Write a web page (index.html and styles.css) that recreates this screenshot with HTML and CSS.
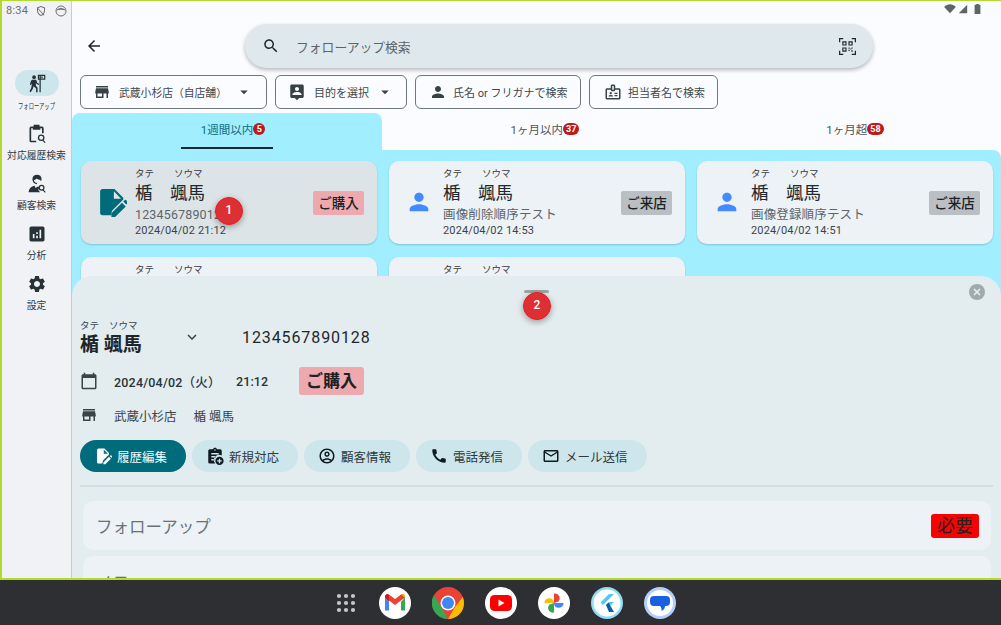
FILE: index.html
```html
<!DOCTYPE html>
<html lang="ja">
<head>
<meta charset="utf-8">
<title>フォローアップ</title>
<link rel="stylesheet" href="styles.css">
</head>
<body>
<div class="screen">
  <nav class="rail">
    <div class="status">
      <span class="time">8:34</span>
      <svg class="st-ico" viewBox="0 0 24 24"><path d="M12 2 4 5v6c0 5 3.400 9.400 8 11 4.600-1.600 8-6 8-11V5zm0 2.200 6 2.200V11c0 4-2.600 7.600-6 9-3.400-1.400-6-5-6-9V6.400z"/><path d="M5 5l14 15-1.400 1.200L4 6z"/></svg>
      <svg class="st-ico" viewBox="0 0 24 24"><circle cx="12" cy="12" r="10" fill="none" stroke="currentColor" stroke-width="2"/><path d="M3 11c2-7 16-7 18 0-5-2-13-2-18 0z"/></svg>
    </div>
    <a class="rail-item first">
      <span class="pill">
        <svg class="rail-ico" viewBox="0 0 24 24"><circle cx="8.500" cy="5" r="2.200"/><path d="M6 8h5l1.500 4 2 1v1.500l-3-1.300-.8-1.500v3.500l2 2.500V23h-1.800v-4.500L8 16l-1 3-2.500 4L3 22l2-4 1-5-1.500 1.500L3.500 14l1-4z"/><path d="M15 3h1.500v20H15z"/><path d="M13 2h9v6h-9zm1.500 1.500v3h6v-3z"/><path d="M16 4.300h3v1.400h-3z"/></svg>
      </span>
      <span class="rail-label small">フォローアップ</span>
    </a>
    <a class="rail-item">
      <svg class="rail-ico plain" viewBox="0 0 24 24"><path d="M8 1h7v2h3a2 2 0 0 1 2 2v6h-2V5h-2v2H7V5H5v15h6v2H5a2 2 0 0 1-2-2V5a2 2 0 0 1 2-2h3z"/><circle cx="17" cy="16.500" r="3.200" fill="none" stroke="currentColor" stroke-width="1.600"/><path d="m19.300 18.800 3 3-1.100 1.100-3-3z"/></svg>
      <span class="rail-label">対応履歴検索</span>
    </a>
    <a class="rail-item">
      <svg class="rail-ico plain" viewBox="0 0 24 24"><path d="M6.500 6C6.500 2.800 9 1 12 1s5.500 1.800 5.500 5c0 .9-.2 1.800-.6 2.500l-1.100-.6c.1-.3.200-.6.200-1-1.200 0-3-.4-4.200-1.600C10.800 6.300 9.300 7.200 8.200 7.300c.3 2 1.800 3.500 3.800 3.500v1.400c-3 0-5.500-2.800-5.500-6.200z"/><path d="M2 22c0-4.500 3.500-7.200 7-7.800L11 18l1-1 .5 5zM14 14.300l-.5 1 1.400 1.200-1.400 2.500 2 3H2.500z"/><circle cx="17.500" cy="16.500" r="2.800" fill="none" stroke="currentColor" stroke-width="1.500"/><path d="m19.500 18.500 3 3-1 1-3-3z"/></svg>
      <span class="rail-label">顧客検索</span>
    </a>
    <a class="rail-item">
      <svg class="rail-ico plain" viewBox="0 0 24 24"><path d="M19 3H5c-1.100 0-2 .9-2 2v14c0 1.100.9 2 2 2h14c1.100 0 2-.9 2-2V5c0-1.100-.9-2-2-2zM9 17H7v-5h2v5zm4 0h-2v-3h2v3zm0-5h-2v-2h2v2zm4 5h-2V7h2v10z"/></svg>
      <span class="rail-label">分析</span>
    </a>
    <a class="rail-item">
      <svg class="rail-ico plain" viewBox="0 0 24 24"><path d="M19.140 12.940c.04-.3.06-.61.06-.94 0-.32-.02-.64-.07-.94l2.030-1.580c.18-.14.23-.41.12-.61l-1.920-3.320c-.12-.22-.37-.29-.59-.22l-2.390.96c-.5-.38-1.030-.7-1.620-.94l-.36-2.540c-.04-.24-.24-.41-.48-.41h-3.840c-.24 0-.43.17-.47.41l-.36 2.540c-.59.24-1.130.57-1.620.94l-2.390-.96c-.22-.08-.47 0-.59.22L2.740 8.870c-.12.21-.08.47.12.61l2.030 1.580c-.05.3-.09.63-.09.94s.02.64.07.94l-2.030 1.580c-.18.14-.23.41-.12.61l1.920 3.320c.12.22.37.29.59.22l2.390-.96c.5.38 1.030.7 1.620.94l.36 2.540c.05.24.24.41.48.41h3.840c.24 0 .44-.17.47-.41l.36-2.540c.59-.24 1.130-.56 1.620-.94l2.390.96c.22.08.47 0 .59-.22l1.920-3.320c.12-.22.07-.47-.12-.61l-2.010-1.580zM12 15.600c-1.980 0-3.600-1.620-3.600-3.600s1.620-3.600 3.600-3.600 3.600 1.620 3.600 3.600-1.620 3.600-3.600 3.600z"/></svg>
      <span class="rail-label">設定</span>
    </a>
  </nav>

  <main class="main">
    <div class="sys-icons">
      <svg viewBox="0 0 14 12" class="sys wifi"><path d="M0 3.500C3.800-.6 10.200-.6 14 3.500L7 11z"/></svg>
      <svg viewBox="0 0 12 12" class="sys signal"><path d="M11 1v10H1z"/></svg>
      <svg viewBox="0 0 8 12" class="sys batt"><path d="M2.500 0h3v1H7.500v11H.5V1h2z"/></svg>
    </div>
    <div class="top-row">
      <svg class="back" viewBox="0 0 24 24"><path d="M20 11H7.830l5.590-5.590L12 4l-8 8 8 8 1.410-1.410L7.830 13H20v-2z"/></svg>
      <div class="search">
        <svg class="search-ico" viewBox="0 0 24 24"><path d="M15.500 14h-.79l-.28-.27C15.410 12.590 16 11.110 16 9.500 16 5.910 13.090 3 9.500 3S3 5.910 3 9.500 5.910 16 9.500 16c1.610 0 3.090-.59 4.230-1.570l.27.28v.79l5 4.990L20.490 19l-4.990-5zm-6 0C7.010 14 5 11.990 5 9.500S7.010 5 9.500 5 14 7.010 14 9.500 11.990 14 9.500 14z"/></svg>
        <span class="search-text">フォローアップ検索</span>
        <svg class="qr" viewBox="0 0 18 18"><path d="M0 0h4.500v1.300H1.300v3.200H0zM13.500 0H18v4.500h-1.300V1.300h-3.200zM0 13.500h1.300v3.200h3.200V18H0zM16.700 13.500H18V18h-4.500v-1.300h3.200z"/><path fill-rule="evenodd" d="M3.500 3.500h4.500V8H3.500zm1.200 1.200v2.100h2.100V4.700zM10 3.500h4.500V8H10zm1.200 1.200v2.100h2.100V4.700zM3.500 10H8v4.500H3.500zm1.200 1.200v2.100h2.100v-2.100z"/><path d="M10 10h1.300v1.300H10zM12 11h1.300v1.300H12zM10 12.500h1.300v1.300H10zM13 13h1.500v1.500H13zM13.300 10h1.200v1H13.300z"/></svg>
      </div>
    </div>
    <div class="filters">
      <button class="filter store-filter">
        <svg class="f-ico" viewBox="0 0 24 24"><path d="M20 4H4v2h16V4zm1 10v-2l-1-5H4l-1 5v2h1v6h10v-6h4v6h2v-6h1zm-9 4H6v-4h6v4z"/></svg>
        <span>武蔵小杉店（自店舗）</span>
        <svg class="caret" viewBox="0 0 24 24"><path d="M7 10l5 5 5-5z"/></svg>
      </button>
      <button class="filter purpose-filter">
        <svg class="f-ico" viewBox="0 0 24 24"><path d="M19 2H5c-1.110 0-2 .9-2 2v14c0 1.100.89 2 2 2h4l3 3 3-3h4c1.100 0 2-.9 2-2V4c0-1.100-.9-2-2-2zm-7 3.300c1.490 0 2.700 1.210 2.700 2.700 0 1.490-1.210 2.700-2.700 2.700-1.490 0-2.700-1.210-2.700-2.700 0-1.490 1.210-2.700 2.700-2.700zM18 16H6v-.9c0-2 4-3.100 6-3.100s6 1.100 6 3.100v.9z"/></svg>
        <span>目的を選択</span>
        <svg class="caret" viewBox="0 0 24 24"><path d="M7 10l5 5 5-5z"/></svg>
      </button>
      <button class="filter name-filter">
        <svg class="f-ico" viewBox="0 0 24 24"><path d="M12 12c2.210 0 4-1.790 4-4s-1.790-4-4-4-4 1.790-4 4 1.790 4 4 4zm0 2c-2.670 0-8 1.340-8 4v2h16v-2c0-2.660-5.330-4-8-4z"/></svg>
        <span>氏名 or フリガナで検索</span>
      </button>
      <button class="filter staff-filter">
        <svg class="f-ico" viewBox="0 0 24 24"><path fill-rule="evenodd" d="M20 7h-5V4c0-1.100-.9-2-2-2h-2c-1.100 0-2 .9-2 2v3H4c-1.100 0-2 .9-2 2v11c0 1.100.9 2 2 2h16c1.100 0 2-.9 2-2V9c0-1.100-.9-2-2-2zM11 4h2v5h-2zm9 16H4V9h5c0 1.100.9 2 2 2h2c1.100 0 2-.9 2-2h5z"/><circle cx="9" cy="13.500" r="1.500"/><path d="M6 18c0-1.500 2-2 3-2s3 .5 3 2zM14 13h4v1.500h-4zM14 16h4v1.500h-4z"/></svg>
        <span>担当者名で検索</span>
      </button>
    </div>
    <div class="tabs">
      <div class="tab active"><span class="tab-text">1週間以内</span><span class="count">5</span><i class="tab-line"></i></div>
      <div class="tab"><span class="tab-text">1ヶ月以内</span><span class="count">37</span></div>
      <div class="tab"><span class="tab-text">1ヶ月超</span><span class="count">58</span></div>
    </div>
    <section class="content">
      <div class="cards">
        <article class="card selected">
          <svg class="card-ico" viewBox="0 0 24 24"><path d="M14 1.500H4.500a2 2 0 0 0-2 2v17a2 2 0 0 0 2 2h6.800l.7-3.500L21 10V8.500z"/><path fill="#dfe6ea" d="M13.500 3.300v6h5.700z"/><path d="M20 12.500l3 3-8.500 8.500h-3v-3zM21 11.500l1-1a1 1 0 0 1 1.400 0l1 1a1 1 0 0 1 0 1.400l-1 1z"/></svg>
          <div class="card-body">
            <div class="kana"><span>タテ</span><span>ソウマ</span></div>
            <div class="name">楯　颯馬</div>
            <div class="memo">1234567890128</div>
            <div class="date">2024/04/02 21:12</div>
          </div>
          <span class="tag buy">ご購入</span>
        </article>
        <article class="card">
          <svg class="card-ico person" viewBox="0 0 24 24"><path d="M12 12c2.210 0 4-1.790 4-4s-1.790-4-4-4-4 1.790-4 4 1.790 4 4 4zm0 2c-2.670 0-8 1.340-8 4v2h16v-2c0-2.660-5.330-4-8-4z"/></svg>
          <div class="card-body">
            <div class="kana"><span>タテ</span><span>ソウマ</span></div>
            <div class="name">楯　颯馬</div>
            <div class="memo">画像削除順序テスト</div>
            <div class="date">2024/04/02 14:53</div>
          </div>
          <span class="tag visit">ご来店</span>
        </article>
        <article class="card">
          <svg class="card-ico person" viewBox="0 0 24 24"><path d="M12 12c2.210 0 4-1.790 4-4s-1.790-4-4-4-4 1.790-4 4 1.790 4 4 4zm0 2c-2.670 0-8 1.340-8 4v2h16v-2c0-2.660-5.330-4-8-4z"/></svg>
          <div class="card-body">
            <div class="kana"><span>タテ</span><span>ソウマ</span></div>
            <div class="name">楯　颯馬</div>
            <div class="memo">画像登録順序テスト</div>
            <div class="date">2024/04/02 14:51</div>
          </div>
          <span class="tag visit">ご来店</span>
        </article>
        <article class="card">
          <div class="card-ico"></div>
          <div class="card-body"><div class="kana"><span>タテ</span><span>ソウマ</span></div></div>
        </article>
        <article class="card">
          <div class="card-ico"></div>
          <div class="card-body"><div class="kana"><span>タテ</span><span>ソウマ</span></div></div>
        </article>
      </div>
    </section>

    <section class="sheet">
      <div class="handle"></div>
      <svg class="close" viewBox="0 0 16 16"><circle cx="8" cy="8" r="8" fill="#a0a9ab"/><path d="M5 5l6 6M11 5l-6 6" stroke="#e6eef0" stroke-width="1.600"/></svg>
      <div class="who">
        <div class="who-name">
          <div class="who-kana"><span>タテ</span><span>ソウマ</span></div>
          <div class="who-full">楯 颯馬</div>
        </div>
        <svg class="chev" viewBox="0 0 24 24"><path d="M16.590 8.590L12 13.170 7.410 8.590 6 10l6 6 6-6z"/></svg>
        <div class="who-id">1234567890128</div>
      </div>
      <div class="info when">
        <svg class="info-ico" viewBox="0 0 24 24"><path d="M20 3h-1V1h-2v2H7V1H5v2H4c-1.100 0-2 .9-2 2v16c0 1.100.9 2 2 2h16c1.100 0 2-.9 2-2V5c0-1.100-.9-2-2-2zm0 18H4V8h16v13z"/></svg>
        <span class="when-date">2024/04/02（火）</span>
        <span class="when-time">21:12</span>
        <span class="big-tag">ご購入</span>
      </div>
      <div class="info where">
        <svg class="info-ico" viewBox="0 0 24 24"><path d="M20 4H4v2h16V4zm1 10v-2l-1-5H4l-1 5v2h1v6h10v-6h4v6h2v-6h1zm-9 4H6v-4h6v4z"/></svg>
        <span class="where-store">武蔵小杉店</span>
        <span>楯 颯馬</span>
      </div>
      <div class="actions">
        <button class="chip primary">
          <svg class="chip-ico" viewBox="0 0 24 24"><path d="M14 2H6a2 2 0 0 0-2 2v16a2 2 0 0 0 2 2h5l1-4 8-8V8zM13 9V3.500L18.500 9z"/><path d="M20 13l2.500 2.500L15 23h-2.500v-2.500zM21 12l.8-.8a.9.9 0 0 1 1.300 0l1 1a.9.9 0 0 1 0 1.300l-.8.8z"/></svg>
          <span>履歴編集</span>
        </button>
        <button class="chip">
          <svg class="chip-ico" viewBox="0 0 24 24"><path d="M19 3h-4.180C14.400 1.840 13.300 1 12 1s-2.400.84-2.820 2H5a2 2 0 0 0-2 2v15a2 2 0 0 0 2 2h7.300A7 7 0 0 1 21 11.300V5a2 2 0 0 0-2-2zm-7 0a1 1 0 1 1 0 2 1 1 0 0 1 0-2zM7 8h10v2H7zm0 4h6v2H7zm0 4h4v2H7z"/><path fill-rule="evenodd" d="M18 13a5.500 5.500 0 1 0 0 11 5.500 5.500 0 0 0 0-11zm-.9 2.500h1.800v2.100H21v1.800h-2.100v2.100h-1.800v-2.100H15v-1.800h2.100z"/></svg>
          <span>新規対応</span>
        </button>
        <button class="chip">
          <svg class="chip-ico" viewBox="0 0 24 24"><path d="M12 2C6.480 2 2 6.480 2 12s4.480 10 10 10 10-4.480 10-10S17.520 2 12 2zM7.350 18.500C8.660 17.560 10.260 17 12 17s3.340.56 4.650 1.500c-1.310.94-2.910 1.500-4.650 1.500s-3.340-.56-4.650-1.500zm10.790-1.380C16.450 15.800 14.320 15 12 15s-4.450.8-6.140 2.120C4.700 15.730 4 13.950 4 12c0-4.420 3.580-8 8-8s8 3.580 8 8c0 1.950-.7 3.730-1.860 5.120z"/><path d="M12 6c-1.930 0-3.500 1.570-3.500 3.500S10.070 13 12 13s3.500-1.570 3.500-3.500S13.930 6 12 6zm0 5c-.83 0-1.500-.67-1.500-1.500S11.170 8 12 8s1.500.67 1.500 1.500S12.830 11 12 11z"/></svg>
          <span>顧客情報</span>
        </button>
        <button class="chip">
          <svg class="chip-ico" viewBox="0 0 24 24"><path d="M20.010 15.380c-1.230 0-2.420-.2-3.530-.56-.35-.12-.74-.03-1.010.24l-1.570 1.970c-2.830-1.350-5.480-3.900-6.890-6.830l1.950-1.660c.27-.28.35-.67.24-1.020-.37-1.110-.56-2.300-.56-3.530 0-.54-.45-.99-.99-.99H4.190C3.650 3 3 3.240 3 3.990 3 13.280 10.730 21 20.010 21c.71 0 .99-.63.99-1.180v-3.450c0-.54-.45-.99-.99-.99z"/></svg>
          <span>電話発信</span>
        </button>
        <button class="chip mail">
          <svg class="chip-ico" viewBox="0 0 24 24"><path d="M20 4H4c-1.100 0-1.990.9-1.990 2L2 18c0 1.100.9 2 2 2h16c1.100 0 2-.9 2-2V6c0-1.100-.9-2-2-2zm0 14H4V8l8 5 8-5v10zm-8-7L4 6h16l-8 5z"/></svg>
          <span>メール送信</span>
        </button>
      </div>
      <hr class="divider">
      <div class="panel">
        <span class="panel-title">フォローアップ</span>
        <span class="need">必要</span>
      </div>
      <div class="panel memo-panel">
        <span class="panel-title">メモ</span>
      </div>
    </section>

    <span class="marker m1">1</span>
    <span class="marker m2">2</span>
  </main>
</div>
<footer class="dock">
  <svg class="dots" viewBox="0 0 20 20"><g fill="#c4c7cb"><circle cx="3" cy="3" r="2.100"/><circle cx="10" cy="3" r="2.100"/><circle cx="17" cy="3" r="2.100"/><circle cx="3" cy="10" r="2.100"/><circle cx="10" cy="10" r="2.100"/><circle cx="17" cy="10" r="2.100"/><circle cx="3" cy="17" r="2.100"/><circle cx="10" cy="17" r="2.100"/><circle cx="17" cy="17" r="2.100"/></g></svg>
  <svg class="app" viewBox="0 0 32 32"><circle cx="16" cy="16" r="16" fill="#fff"/><path d="M6 10.500v13h4V15z" fill="#4285f4"/><path d="M22 15v8.500h4v-13z" fill="#34a853"/><path d="M6 10.500 16 18l10-7.500V9a2.500 2.500 0 0 0-4-1.500L16 12l-6-4.500A2.500 2.500 0 0 0 6 9z" fill="#ea4335"/><path d="M22 7.500l4 3 0-1.500a2.500 2.500 0 0 0-4-1.500z" fill="#fbbc04"/><path d="M6 9v1.500L10 15V8A2.500 2.500 0 0 0 6 9z" fill="#c5221f"/></svg>
  <svg class="app" viewBox="0 0 32 32"><circle cx="16" cy="16" r="16" fill="#ea4335"/><path d="M16 32A16 16 0 0 1 2.100 8l7 12z" fill="#34a853"/><path d="M16 32l7-12 7.800-10A16 16 0 0 1 16 32z" fill="#fbbc04"/><circle cx="16" cy="16" r="7.500" fill="#fff"/><circle cx="16" cy="16" r="6" fill="#4285f4"/></svg>
  <svg class="app" viewBox="0 0 32 32"><circle cx="16" cy="16" r="16" fill="#fff"/><rect x="5" y="8" width="22" height="16" rx="4.500" fill="#f00"/><path d="M13.500 12.500v7l6-3.500z" fill="#fff"/></svg>
  <svg class="app" viewBox="0 0 32 32"><circle cx="16" cy="16" r="16" fill="#fff"/><path d="M16 16H6.500a4.800 4.800 0 0 1 9.500-1z" fill="#fbbc04"/><path d="M16 16V6.500a4.800 4.800 0 0 1 1-.1 4.800 4.800 0 0 1 3.500 8z" fill="#ea4335"/><path d="M16 16h9.500a4.800 4.800 0 0 1-9.500 1z" fill="#4285f4"/><path d="M16 16v9.500a4.800 4.800 0 0 1-4.500-8z" fill="#34a853"/></svg>
  <svg class="app" viewBox="0 0 32 32"><circle cx="16" cy="16" r="16" fill="#8fdcf5"/><circle cx="16" cy="16" r="13.500" fill="#fff"/><path d="M18 7h5l-11 11-2.500-2.500z" fill="#54c5f8"/><path d="M18 15h5l-5.500 5.500-2.500-2.500z" fill="#54c5f8"/><path d="M15 18l2.500-2.500L23 25h-5z" fill="#01579b" opacity=".95"/></svg>
  <svg class="app" viewBox="0 0 32 32"><circle cx="16" cy="16" r="16" fill="#b4cefb"/><circle cx="16" cy="16" r="13" fill="#fff"/><path d="M10 9h12a4 4 0 0 1 4 4v2a4 4 0 0 1-4 4h-1c0 2-1 4-3.500 5 .3-2-.2-3.800-1.500-5H10a4 4 0 0 1-4-4v-2a4 4 0 0 1 4-4z" fill="#1a5fe0"/></svg>
</footer>
</body>
</html>
```

FILE: styles.css
```css
* { box-sizing: border-box; }
html, body { margin: 0; padding: 0; }
body {
  width: 1001px;
  height: 625px;
  overflow: hidden;
  display: flex;
  flex-direction: column;
  font-family: Roboto, "Noto Sans CJK JP", sans-serif;
  color: #1f2a30;
  background: #2d2f33;
}
button { font: inherit; color: inherit; background: none; padding: 0; margin: 0; }
svg { fill: currentColor; display: block; flex: none; }

.screen {
  flex: none;
  height: 580px;
  display: flex;
  border-top: 1px solid #b3d92c;
  border-left: 2px solid #b3d92c;
  border-bottom: 2px solid #b3d92c;
  background: #fafcff;
}

/* rail */
.rail {
  flex: none;
  width: 70px;
  background: #f0f2f5;
  border-right: 1px solid #c9ccce;
  display: flex;
  flex-direction: column;
  align-items: center;
}
.status {
  align-self: stretch;
  height: 69px;
  padding: 3px 0 0 4px;
  display: flex;
  align-items: flex-start;
  gap: 7px;
  color: #6c7073;
  font-size: 10px;
  line-height: 14px;
  flex: none;
}
.time { font-size: 11px; letter-spacing: .2px; }
.st-ico { width: 12px; height: 12px; margin-top: 1px; }
.status .st-ico + .st-ico { margin-left: 1px; }
.rail-item {
  width: 100%;
  height: 50px;
  display: flex;
  flex-direction: column;
  align-items: center;
  flex: none;
  color: #263238;
}
.rail-item.first { height: 51px; }
.pill {
  width: 44px;
  height: 26px;
  border-radius: 13px;
  background: #cde6ec;
  display: flex;
  align-items: center;
  justify-content: center;
}
.rail-ico { width: 20px; height: 20px; }
.rail-ico.plain { margin-top: 3px; }
.rail-label {
  font-size: 9.800px;
  line-height: 12px;
  margin-top: 6px;
  white-space: nowrap;
  color: #30393e;
}
.rail-label.small { font-size: 5.300px; margin-top: 4px; transform: scaleY(1.500); }

/* main */
.main { flex: 1; min-width: 0; position: relative; display: flex; flex-direction: column; }
.sys-icons {
  position: absolute;
  top: 3px;
  right: 20px;
  display: flex;
  gap: 2px;
  color: #5f6468;
}
.sys { height: 10px; width: 12px; }
.wifi { width: 12px; }
.signal { width: 10px; }
.batt { width: 7px; margin-left: 4px; }

.top-row {
  flex: none;
  height: 44px;
  margin-top: 23px;
  display: flex;
  align-items: center;
  padding-left: 13px;
}
.back { width: 18px; height: 18px; color: #1d2528; }
.search {
  width: 628px;
  height: 44px;
  margin-left: 142px;
  border-radius: 22px;
  background: #dfe9ed;
  box-shadow: 0 2px 4px rgba(0,0,0,.28);
  display: flex;
  align-items: center;
  padding: 0 17px;
}
.search-ico { width: 18px; height: 18px; color: #22292d; }
.search-text { margin-left: 16px; font-size: 12.800px; color: #5b6469; flex: 1; }
.qr { width: 17px; height: 17px; color: #1e272b; }

.filters {
  flex: none;
  display: flex;
  height: 34px;
  margin: 7px 0 0 8px;
  gap: 8px;
}
.filter {
  height: 34px;
  border: 1px solid #6e787c;
  border-radius: 6px;
  display: flex;
  align-items: center;
  font-size: 11px;
  color: #3d474c;
  padding: 0 0 0 12px;
}
.f-ico { width: 18px; height: 18px; color: #374247; margin-right: 8px; }
.caret { width: 18px; height: 18px; color: #374247; }
.store-filter { width: 187px; font-size: 10.800px; }
.store-filter .caret { margin-left: 8px; }
.purpose-filter { width: 132px; }
.purpose-filter .caret { margin-left: 7px; }
.name-filter { width: 166px; padding-left: 13px; }
.name-filter .f-ico { margin-right: 6px; }
.staff-filter { width: 129px; padding-left: 14px; }
.staff-filter .f-ico { margin-right: 6px; }

.tabs { flex: none; display: flex; height: 37px; margin-top: 4px; }
.tab {
  flex: 0 0 310px;
  position: relative;
  display: flex;
  align-items: flex-start;
  justify-content: center;
  padding: 9px 0 0 16px;
  font-size: 11.500px;
  line-height: 16px;
  color: #4d565b;
}
.tab.active { background: #a0eeff; border-radius: 8px 8px 0 0; color: #0c6f80; padding-left: 12px; }
.count {
  min-width: 12px;
  height: 12px;
  border-radius: 6px;
  padding: 0 3px;
  margin-top: 1px;
  background: #bd1a1a;
  color: #fff;
  font-size: 9px;
  font-weight: 700;
  line-height: 12px;
  text-align: center;
}
.tab-line {
  position: absolute;
  left: 109px;
  width: 92px;
  bottom: 1px;
  height: 2px;
  background: #1a2a30;
}

.content {
  flex: 1;
  min-height: 0;
  overflow: hidden;
  background: #a0eeff;
  border-radius: 0 8px 0 0;
  padding: 11px 8px 0 9px;
}
.cards {
  display: grid;
  grid-template-columns: repeat(3, 296px);
  grid-auto-rows: 83px;
  column-gap: 12px;
  row-gap: 13px;
}
.card {
  background: #edf2f6;
  border-radius: 10px;
  box-shadow: 0 1px 2px rgba(0,0,0,.18);
  display: flex;
  align-items: flex-start;
  padding: 0 13px 0 16px;
  position: relative;
}
.card.selected { background: #dde4e7; }
.card-ico { width: 30px; height: 30px; margin: 26px 8px 0 0; color: #006b7a; flex: none; }
.card-ico.person { color: #448aff; margin: 27px 10px 0 0; width: 28px; height: 28px; }
.card-body { flex: 1; min-width: 0; padding-top: 7px; }
.kana { display: flex; font-size: 9.500px; line-height: 12px; color: #333b40; }
.kana span:first-child { width: 39px; }
.name { font-size: 17.500px; line-height: 26px; color: #20282c; }
.memo { font-size: 12.500px; line-height: 17px; color: #5c6469; letter-spacing: .15px; }
.date { font-size: 11px; line-height: 15px; color: #3c4449; letter-spacing: .15px; }
.tag {
  flex: none;
  width: 51px;
  height: 24px;
  margin-top: 30px;
  font-size: 13.500px;
  font-weight: 500;
  line-height: 24px;
  text-align: center;
  border-radius: 2px;
  color: #1c2226;
}
.tag.buy { background: #eea9ae; }
.tag.visit { background: #b9bfc2; }

/* sheet */
.sheet {
  position: absolute;
  left: 0;
  right: 0;
  top: 275px;
  bottom: 0;
  overflow: hidden;
  background: #e3ecef;
  border-radius: 20px 20px 0 0;
  display: flex;
  flex-direction: column;
  padding: 0 8px;
}
.handle {
  flex: none;
  align-self: center;
  width: 25px;
  height: 3px;
  margin-top: 14px;
  border-radius: 2px;
  background: #9ca5a8;
}
.close {
  position: absolute;
  top: 8px;
  right: 16px;
  width: 16px;
  height: 16px;
}
.who { flex: none; display: flex; align-items: center; margin-top: 26px; height: 38px; }
.who-name { width: 103px; }
.who-kana { display: flex; font-size: 9.500px; line-height: 12px; color: #39424a; }
.who-kana span:first-child { width: 29px; }
.who-full { font-size: 19px; font-weight: 700; line-height: 25px; color: #1e2529; }
.chev { width: 18px; height: 18px; color: #39424a; margin-bottom: 2px; }
.who-id { margin-left: 41px; font-size: 16px; letter-spacing: .9px; color: #1f272b; margin-bottom: 2px; }
.info { flex: none; display: flex; align-items: center; color: #2b3337; }
.info-ico { width: 18px; height: 18px; color: #3a4347; margin-right: 16px; }
.when { height: 28px; margin-top: 10px; }
.when-date { width: 122px; font-size: 12.500px; font-weight: 500; letter-spacing: .2px; }
.when-time { width: 63px; font-size: 12.500px; font-weight: 500; letter-spacing: .1px; }
.big-tag {
  width: 65px;
  height: 28px;
  background: #eea9ae;
  border-radius: 3px;
  font-size: 17px;
  font-weight: 700;
  line-height: 28px;
  text-align: center;
  color: #1c2226;
}
.where { height: 18px; margin-top: 11px; font-size: 12.500px; color: #3a4347; }
.where-store { margin-right: 17px; }
.actions { flex: none; display: flex; gap: 6px; margin-top: 16px; }
.chip {
  width: 106px;
  height: 32px;
  border: 0;
  border-radius: 16px;
  background: #cde6ec;
  display: flex;
  align-items: center;
  font-size: 12.500px;
  color: #2e383d;
  padding-left: 14px;
}
.chip.mail { width: 119px; }
.chip.primary { background: #006b7a; color: #f2fbfc; }
.chip-ico { width: 18px; height: 18px; margin-right: 5px; color: #0e1b20; }
.primary .chip-ico { color: #fff; }
.divider {
  flex: none;
  width: 913px;
  height: 2px;
  margin: 13px 0 14px;
  border: 0;
  background: #d4dde0;
}
.panel {
  flex: none;
  width: 908px;
  height: 49px;
  margin: 0 0 6px 3px;
  border-radius: 10px;
  background: #ecf2f5;
  display: flex;
  align-items: center;
  justify-content: space-between;
  padding: 0 12px 0 13px;
}
.panel-title { font-size: 16.500px; color: #6a7276; }
.memo-panel { align-items: flex-start; padding-top: 14px; }
.need {
  width: 48px;
  height: 24px;
  border-radius: 3px;
  background: #f60303;
  color: #222;
  font-size: 18px;
  line-height: 24px;
  text-align: center;
  margin-top: 1px;
}

.marker {
  position: absolute;
  width: 28px;
  height: 28px;
  border-radius: 50%;
  background: #dc3035;
  border: 1.500px solid #f01a1e;
  box-shadow: 0 2px 6px rgba(0,0,0,.35);
  color: #fff;
  font-size: 12px;
  font-weight: 500;
  line-height: 25px;
  text-align: center;
}
.m1 { left: 143px; top: 196px; }
.m2 { left: 451px; top: 291px; }

/* dock */
.dock {
  flex: 1;
  display: flex;
  align-items: center;
  justify-content: center;
  gap: 21px;
  background: #2d2f33;
  padding-left: 10px;
}
.dots { width: 20px; height: 20px; margin-right: 2px; }
.app { width: 32px; height: 32px; }
```
